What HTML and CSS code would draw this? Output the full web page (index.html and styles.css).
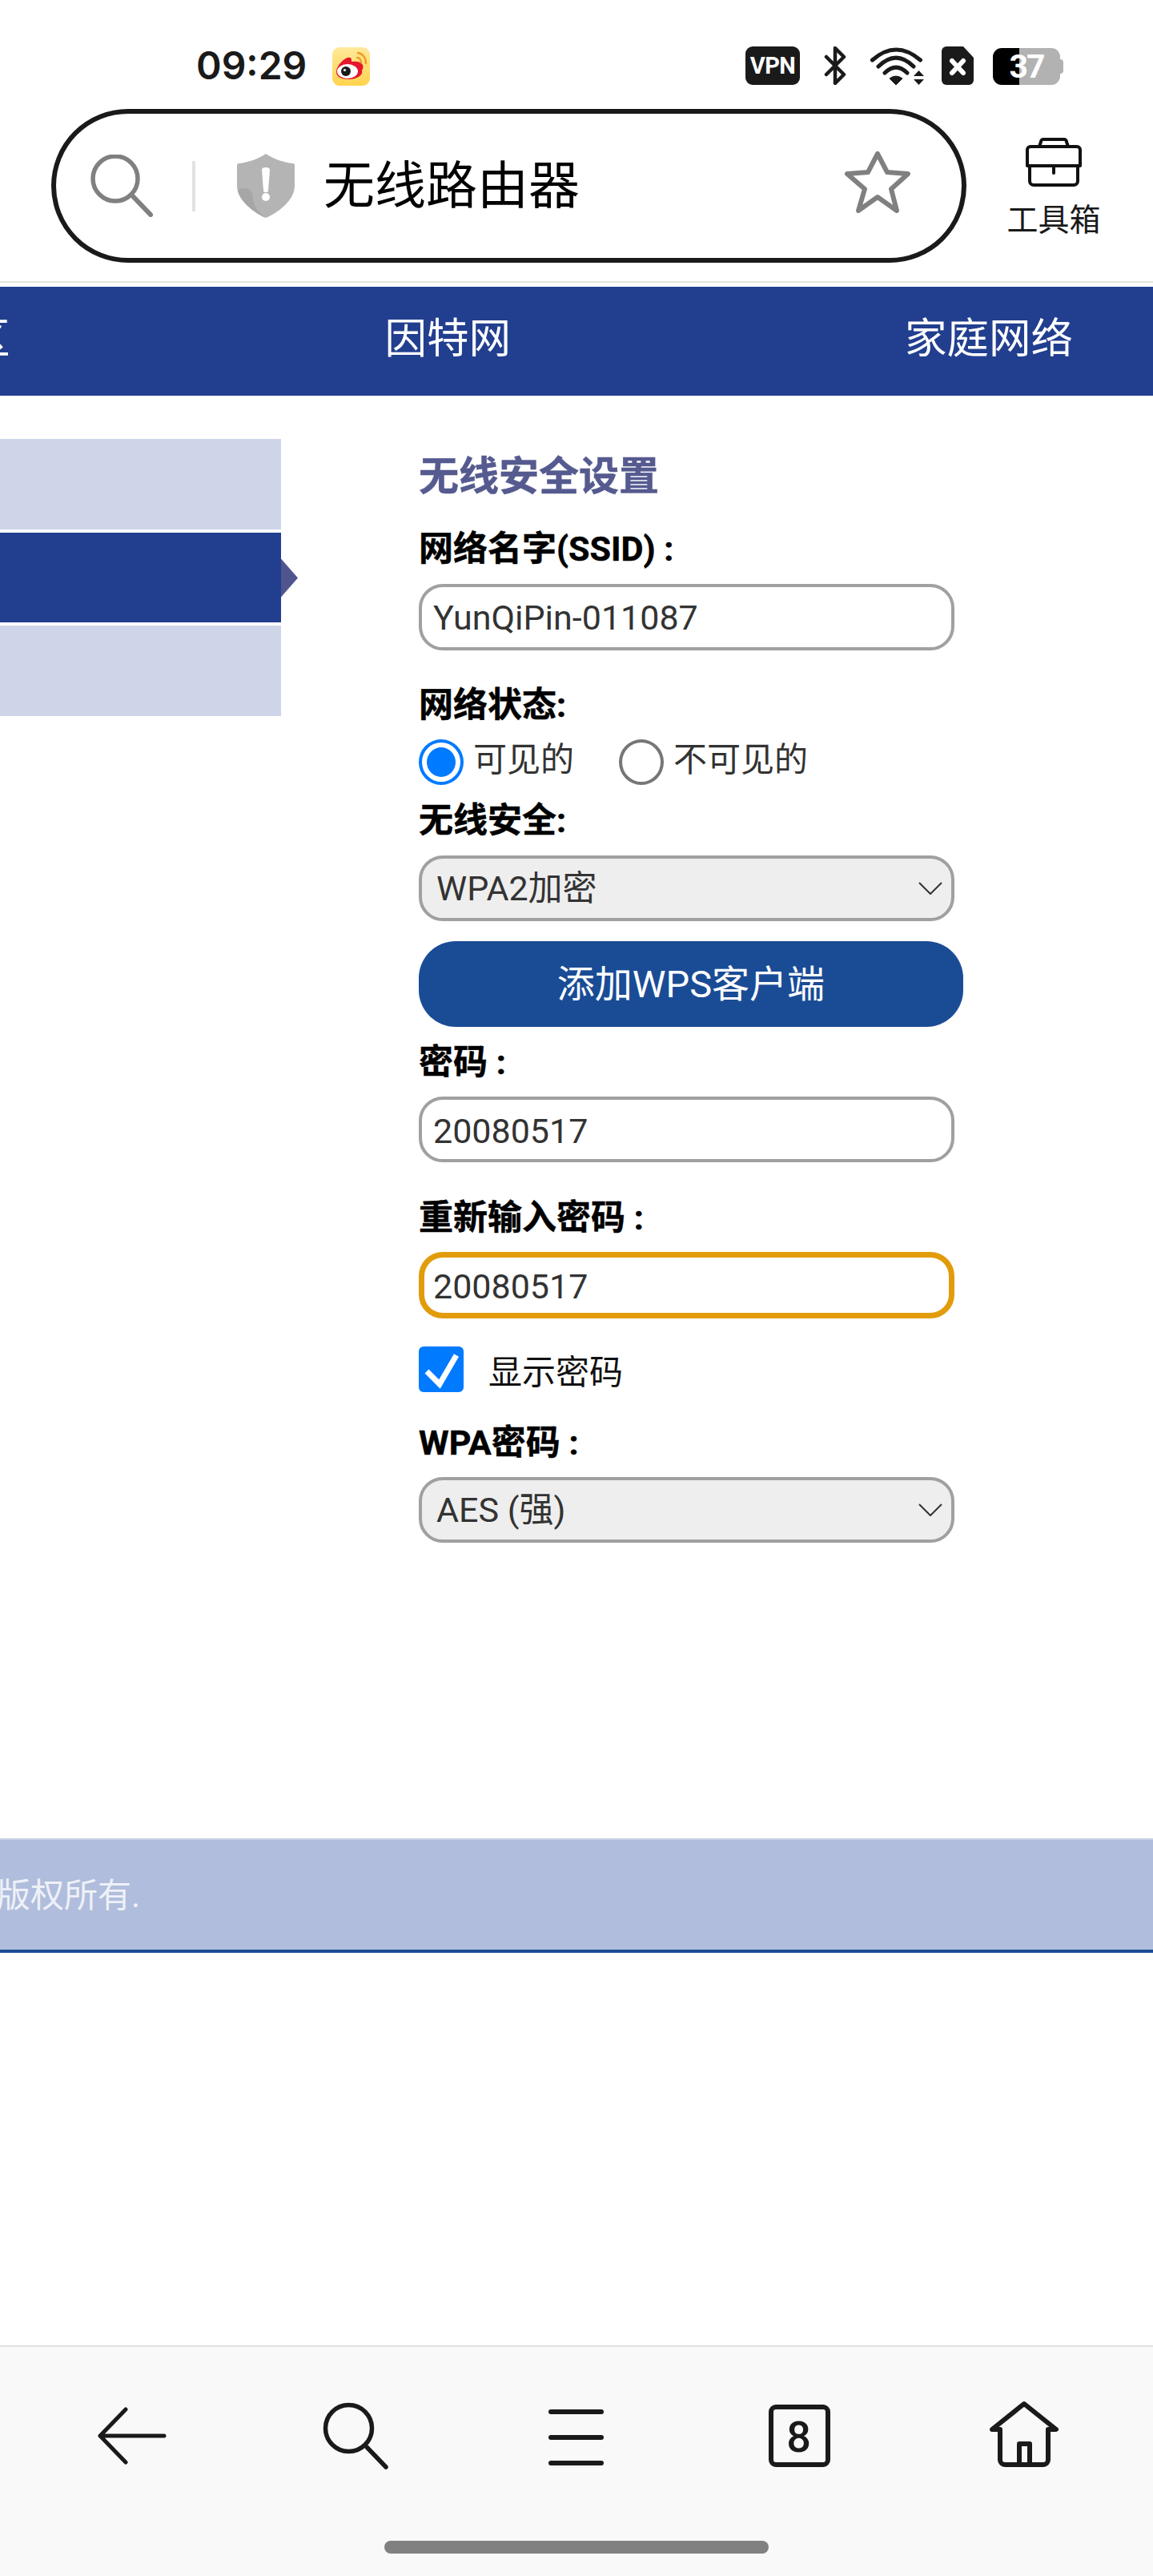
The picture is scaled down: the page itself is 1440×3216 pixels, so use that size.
FILE: index.html
```html
<!DOCTYPE html>
<html lang="zh-CN">
<head>
<meta charset="utf-8">
<title>无线安全设置</title>
<link rel="stylesheet" href="styles.css">
</head>
<body>
<div class="screen">
  <header class="chrome">
    <div class="status">
      <span class="time">09:29</span>
      <svg class="weibo" width="47" height="48" viewBox="0 0 47 48">
        <defs><linearGradient id="wb" x1="0" y1="0" x2="0" y2="1"><stop offset="0" stop-color="#ffe99a"/><stop offset="1" stop-color="#ffd34d"/></linearGradient></defs>
        <rect width="47" height="48" rx="9" fill="url(#wb)"/>
        <path d="M5 31c0-7 7-15 14-18 3-1 5 0 5 3l0 2c5-1 12 0 14 4 1 3 0 5-1 7 2 6-7 11-16 11-9 0-16-3-16-9z" fill="#e6162d"/>
        <ellipse cx="19" cy="30" rx="13" ry="9" fill="#fff"/>
        <circle cx="17" cy="30" r="6" fill="#1a1a1a"/>
        <circle cx="15.5" cy="28.5" r="1.6" fill="#fff"/>
        <path d="M32 7c6 1 10 6 10 13M31 13c3 0 5 3 5 6" fill="none" stroke="#f59a23" stroke-width="2.4" stroke-linecap="round"/>
      </svg>
      <div class="status-right">
        <span class="vpn">VPN</span>
        <svg class="bt" width="28" height="48" viewBox="0 0 28 48"><path d="M3 13l22 22-11 11V2l11 11L3 35" fill="none" stroke="#1a1a1a" stroke-width="4.5" stroke-linecap="round" stroke-linejoin="round"/></svg>
        <svg class="wifi" width="68" height="48" viewBox="0 0 68 48">
          <path d="M2.500 17Q32-9 62.500 17M10 25Q32 3 54 25M18 33Q32 19 46 33" fill="none" stroke="#1a1a1a" stroke-width="5" stroke-linecap="round"/>
          <path d="M24 40Q32 34 40 40L32 48Z" fill="#1a1a1a" stroke="#1a1a1a" stroke-width="1" stroke-linejoin="round"/>
          <path d="M54 37h13l-6.500-7zM54 41h13l-6.500 7z" fill="#1a1a1a"/>
        </svg>
        <svg class="sim" width="40" height="48" viewBox="0 0 40 48">
          <path d="M6 0H27L40 14V42a6 6 0 0 1-6 6H6a6 6 0 0 1-6-6V6a6 6 0 0 1 6-6z" fill="#1a1a1a"/>
          <path d="M13 18L27 33M27 18L13 33" stroke="#fff" stroke-width="6" stroke-linecap="round"/>
        </svg>
        <span class="battery">37</span>
      </div>
    </div>
    <div class="urlrow">
      <div class="pill">
        <svg class="pill-search" width="78" height="78" viewBox="0 0 78 78"><circle cx="31" cy="30" r="28" fill="none" stroke="#808080" stroke-width="5.500"/><path d="M52 51L75 75" stroke="#808080" stroke-width="6" stroke-linecap="round"/></svg>
        <span class="pill-div"></span>
        <svg class="shield" width="72" height="80" viewBox="0 0 72 80">
          <path d="M36 0C45 6 58 11 70 12Q72 12 72 15V40C72 58 52 73 36 80C20 73 0 58 0 40V15Q0 12 2 12C14 11 27 6 36 0Z" fill="#b4b4b4"/>
          <path d="M36 80C20 73 3 58 1 45C12 40 20 44 20 56C20 66 28 74 36 80Z" fill="#a6a6a6"/>
          <path d="M31 20a5 3 0 0 1 10 0L39 46a3 2 0 0 1-6 0z" fill="#fff"/>
          <circle cx="36" cy="54" r="5" fill="#fff"/>
        </svg>
        <span class="pill-text">无线路由器</span>
        <svg class="star" width="82" height="78" viewBox="0 0 82 78"><path d="M41 4L53 27L79 29L58 48L65 75L41 58L17 75L25 48L3 29L29 27Z" fill="none" stroke="#808080" stroke-width="6" stroke-linejoin="round"/></svg>
      </div>
      <div class="tool">
        <svg width="72" height="62" viewBox="0 0 72 62" fill="none" stroke="#111" stroke-width="4" stroke-linecap="round" stroke-linejoin="round">
          <path d="M7 11H65a4 4 0 0 1 4 4V35H3V15a4 4 0 0 1 4-4z"/>
          <path d="M6 35V54a5 5 0 0 0 5 5H61a5 5 0 0 0 5-5V35"/>
          <path d="M18 11L20 5a3 3 0 0 1 3-3H49a3 3 0 0 1 3 3L54 11"/>
          <path d="M36 35V44"/>
        </svg>
        <span class="tool-label">工具箱</span>
      </div>
    </div>
  </header>

  <nav class="nav">
    <span class="nav-a">区</span>
    <span class="nav-b">因特网</span>
    <span class="nav-c">家庭网络</span>
  </nav>

  <main class="main">
    <aside class="side">
      <div class="side-item"></div>
      <div class="side-item active"></div>
      <div class="side-item"></div>
    </aside>
    <section class="form">
      <h1 class="title">无线安全设置</h1>
      <div class="label l-ssid">网络名字(SSID) :</div>
      <div class="field">YunQiPin-011087</div>
      <div class="label l-state">网络状态:</div>
      <div class="radios">
        <span class="radio on"></span><span class="radio-text">可见的</span>
        <span class="radio second"></span><span class="radio-text">不可见的</span>
      </div>
      <div class="label l-sec">无线安全:</div>
      <div class="field select">WPA2加密
        <svg class="chev" width="30" height="16" viewBox="0 0 30 16"><path d="M1 1L15 15L29 1" fill="none" stroke="#333" stroke-width="2"/></svg>
      </div>
      <div class="button">添加WPS客户端</div>
      <div class="label l-pw">密码 :</div>
      <div class="field f-pw">20080517</div>
      <div class="label l-re">重新输入密码 :</div>
      <div class="field focus">20080517</div>
      <div class="checkrow">
        <svg class="check" width="56" height="57" viewBox="0 0 56 57"><rect width="56" height="57" rx="6" fill="#007aff"/><path d="M10 31L26 47L47 11" fill="none" stroke="#fff" stroke-width="7"/></svg>
        <span class="check-text">显示密码</span>
      </div>
      <div class="label l-wpa">WPA密码 :</div>
      <div class="field select f-wpa">AES (强)
        <svg class="chev" width="30" height="16" viewBox="0 0 30 16"><path d="M1 1L15 15L29 1" fill="none" stroke="#333" stroke-width="2"/></svg>
      </div>
    </section>
  </main>

  <footer class="foot"><span>版权所有.</span></footer>

  <div class="spacer"></div>

  <div class="bottom">
    <div class="bar-icons">
      <svg width="100" height="100" viewBox="0 0 100 100" fill="none" stroke="#1a1a1a" stroke-width="5" stroke-linecap="round" stroke-linejoin="round"><path d="M10 51H90M42 18L10 51L42 84"/></svg>
      <svg width="100" height="100" viewBox="0 0 100 100" fill="none" stroke="#1a1a1a" stroke-width="5.500" stroke-linecap="round"><circle cx="41.500" cy="41.500" r="29"/><path d="M64 65L88 90"/></svg>
      <svg width="100" height="100" viewBox="0 0 100 100" fill="none" stroke="#1a1a1a" stroke-width="6" stroke-linecap="round"><path d="M15 21H78M15 53H78M15 85H78"/></svg>
      <svg width="100" height="100" viewBox="0 0 100 100"><rect x="11" y="15" width="71" height="72" rx="6" fill="none" stroke="#1a1a1a" stroke-width="6"/><text class="tab-count" x="45.500" y="71" text-anchor="middle">8</text></svg>
      <svg width="100" height="100" viewBox="0 0 100 100" fill="none" stroke="#1a1a1a" stroke-width="6" stroke-linejoin="round"><path d="M18 43H8L48 11L88 43H78V81a6 6 0 0 1-6 6H24a6 6 0 0 1-6-6z"/><path d="M42 87V61H55V87"/></svg>
    </div>
    <div class="home-pill"></div>
  </div>
</div>
</body>
</html>
```

FILE: styles.css
```css
* { box-sizing: border-box; }
html, body { margin: 0; padding: 0; }
body { background: #fff; font-family: "Roboto", "Noto Sans CJK SC", sans-serif; color: #333; }
.screen { width: 1440px; height: 3216px; display: flex; flex-direction: column; overflow: hidden; }

.chrome { height: 353px; border-bottom: 2px solid #e2e2e2; }
.status { height: 136px; padding: 58px 0 0 245px; display: flex; align-items: flex-start; }
.time { font-family: "Inter", sans-serif; font-weight: 600; font-size: 48px; line-height: 48px; color: #1a1a1a; }
.weibo { margin-left: 32px; margin-top: 1px; }
.status-right { margin-left: auto; padding-right: 116px; display: flex; align-items: flex-start; }
.vpn { width: 68px; height: 48px; border-radius: 9px; background: #1a1a1a; color: #fff; font-weight: 700; font-size: 29px; line-height: 48px; text-align: center; letter-spacing: -.5px; }
.bt { margin-left: 30px; }
.wifi { margin-left: 30px; }
.sim { margin-left: 21px; }
.battery { position: relative; margin-left: 24px; margin-top: 2px; width: 84px; height: 46px; border-radius: 11px; background: linear-gradient(90deg, #000 33px, #b2b2b2 33px); color: #fff; font-weight: 700; font-size: 41px; line-height: 46px; text-align: center; letter-spacing: -2px; }
.battery::after { content: ""; position: absolute; right: -4px; top: 14px; width: 4px; height: 18px; border-radius: 0 4px 4px 0; background: #b2b2b2; }

.urlrow { display: flex; align-items: flex-start; padding-left: 64px; }
.pill { width: 1143px; height: 192px; border: 6px solid #1a1a1a; border-radius: 96px; display: flex; align-items: center; }
.pill-search { margin-left: 43px; }
.pill-div { width: 4px; height: 63px; margin-left: 49px; background: #e2e2e2; }
.shield { margin-left: 52px; }
.pill-text { margin-left: 36px; margin-bottom: 12px; font-family: "Noto Sans CJK SC", sans-serif; font-size: 64px; line-height: 80px; color: #000; }
.star { margin-left: auto; margin-right: 64px; margin-bottom: 10px; }
.tool { margin-left: 50px; margin-top: 36px; width: 118px; display: flex; flex-direction: column; align-items: center; }
.tool-label { margin-top: 14px; font-family: "Noto Sans CJK SC", sans-serif; font-size: 39px; line-height: 46px; color: #1a1a1a; white-space: nowrap; }

.nav { margin-top: 5px; height: 136px; padding-bottom: 16px; background: #223f8f; color: #fff; display: flex; align-items: center; font-family: "Noto Sans CJK SC", sans-serif; font-size: 52.5px; line-height: 64px; white-space: nowrap; }
.nav-a { margin-left: -40px; }
.nav-b { margin-left: 468px; }
.nav-c { margin-left: 492px; }

.main { height: 1801px; display: flex; padding-top: 54px; align-items: flex-start; }
.side { width: 351px; display: flex; flex-direction: column; gap: 4px; }
.side-item { height: 112.5px; background: #cfd5e8; position: relative; }
.side-item.active { background: #223f8f; }
.side-item.active::after { content: ""; position: absolute; left: 100%; top: 33px; width: 21px; height: 48px; background: #50558f; clip-path: polygon(0 0, 100% 50%, 0 100%); }

.form { margin-left: 172px; padding-top: 23px; width: 690px; }
.title { margin: 0; font-size: 50px; line-height: 48px; font-weight: 700; color: #555a8f; -webkit-text-stroke: .5px #555a8f; }
.label { height: 44px; font-size: 43px; line-height: 44px; font-weight: 700; color: #000; white-space: nowrap; -webkit-text-stroke: .5px #000; }
.l-ssid { margin-top: 44px; }
.l-state { margin-top: 46px; }
.l-sec { margin-top: 22px; }
.l-pw { margin-top: 22px; }
.l-re { margin-top: 47px; }
.l-wpa { margin-top: 41px; }

.field { display: flex; align-items: center; width: 669px; height: 83px; margin-top: 22px; padding-left: 14px; border: 4px solid #a0a0a0; border-radius: 30px; background: #fff; font-size: 43px; line-height: 50px; color: #333; }
.f-pw { margin-top: 21px; height: 82px; padding-top: 3px; }
.select { background: #eee; padding-left: 18px; height: 82px; }
.chev { margin-left: auto; margin-right: 11px; }
.focus { border: 7px solid #e29c0b; padding-left: 11px; padding-top: 3px; margin-top: 21px; }
.f-wpa { margin-top: 21px; }

.radios { margin-top: 21px; display: flex; align-items: center; height: 57px; }
.radio { width: 56px; height: 57px; border: 4px solid #767676; border-radius: 50%; }
.radio.on { border-color: #007aff; padding: 6px; background: #007aff; background-clip: content-box; }
.radio.second { margin-left: 56px; }
.radio-text { margin-left: 12px; margin-bottom: 6px; font-size: 42px; line-height: 50px; color: #333; }

.button { margin-top: 25px; width: 680px; height: 107px; border-radius: 46px; background: #1a4c96; color: #fff; font-size: 47px; line-height: 54px; display: flex; align-items: center; justify-content: center; }

.checkrow { margin-top: 35px; display: flex; align-items: center; height: 57px; }
.check-text { margin-left: 31px; margin-top: 8px; font-size: 42px; line-height: 50px; color: #111; }

.foot { height: 143px; padding-top: 3px; background: #b0bddc; border-top: 2px solid #c8d1e6; border-bottom: 4px solid #1a4c96; display: flex; align-items: center; color: #eef1f8; font-size: 42px; line-height: 50px; white-space: nowrap; }
.foot span { margin-left: -4px; }

.spacer { flex: 1; }

.bottom { height: 288px; background: #f9f9f9; border-top: 2px solid #e0e0e0; padding-top: 60px; }
.bar-icons { display: flex; gap: 179px; padding-left: 115px; height: 100px; }
.tab-count { font-family: "Roboto", sans-serif; font-weight: 500; font-size: 54px; fill: #1a1a1a; }
.home-pill { width: 480px; height: 16px; margin: 82px 0 0 480px; border-radius: 8px; background: #808080; }
```
